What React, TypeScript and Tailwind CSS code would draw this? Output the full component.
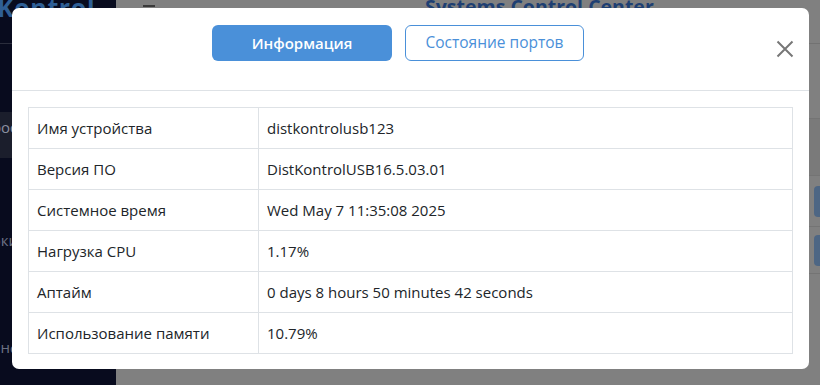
import React from "react";

const rows: [string, string][] = [
	["Имя устройства", "distkontrolusb123"],
	["Версия ПО", "DistKontrolUSB16.5.03.01"],
	["Системное время", "Wed May 7 11:35:08 2025"],
	["Нагрузка CPU", "1.17%"],
	["Аптайм", "0 days 8 hours 50 minutes 42 seconds"],
	["Использование памяти", "10.79%"],
];

// only the first ~12px of each sidebar item peeks out from under the modal
function NavItem({ text, shift, active }: { text: string; shift: string; active?: boolean }) {
	return (
		<div className={`w-[12px] overflow-hidden whitespace-nowrap text-[15px] ${active ? "text-[#8a8fa0]" : "text-[#6c7184]"}`}>
			<span className={`block ${shift}`}>{text}</span>
		</div>
	);
}

function Sidebar() {
	return (
		<aside className="w-[116px] h-full bg-[#080b1e] flex flex-col shrink-0 overflow-hidden">
			<div className="h-[44px] border-b border-[#2a2d3c] overflow-hidden">
				<p className="mt-[-11px] ml-[-3px] text-[25px] font-bold text-[#2f5f95] tracking-wide">
					Kontrol
				</p>
			</div>
			<div className="mt-[68px] h-[46px] bg-[#1b1e2c] flex items-start pt-[4px]">
				<NavItem text="Просмотр" shift="ml-[-19px]" active />
			</div>
			<div className="mt-[71px]">
				<NavItem text="Блокировки" shift="ml-[-26px]" />
			</div>
			<div className="mt-[84px]">
				<NavItem text="Информация" shift="ml-[-11px]" />
			</div>
		</aside>
	);
}

function Backdrop() {
	return (
		<main className="flex-1 h-full bg-[#808080] flex flex-col">
			<header className="h-[44px] border-b border-[#727272] flex items-start">
				<span className="ml-[27px] mt-[5px] w-[12px] h-[2px] bg-[#3a3a3a]" />
				<h1 className="ml-[270px] mt-[-8px] text-[19.5px] font-bold text-[#1e3f72]">
					Systems Control Center
				</h1>
			</header>
			<div className="mt-[74px] h-[58px] bg-[#7a7a7a] border-y border-[#747474]" />
			<div className="h-[51px] border-b border-[#747474] flex justify-end items-center">
				<span className="w-[6px] h-[31px] rounded-l bg-[#4d6684]" />
			</div>
			<div className="h-[47px] border-b border-[#747474] flex justify-end items-center">
				<span className="w-[6px] h-[31px] rounded-l bg-[#4d6684]" />
			</div>
		</main>
	);
}

function InfoModal() {
	return (
		<div className="absolute left-[12px] top-[8px] w-[797px] h-[361px] bg-white rounded-[7px] flex flex-col">
			<div className="h-[83px] border-b border-[#dee2e6] relative shrink-0">
				<div className="pl-[200px] pt-[17px] flex gap-[13px]">
					<button className="w-[180px] h-[36px] rounded-[6px] bg-[#4a90d9] text-white text-[15px] font-semibold">
						Информация
					</button>
					<button className="w-[179px] h-[36px] rounded-[6px] border border-[#4a90d9] text-[#4a90d9] text-[15.5px] bg-white">
						Состояние портов
					</button>
				</div>
				<button className="absolute left-[763px] top-[31px] w-[20px] h-[20px] text-[#777]" aria-label="close">
					<svg viewBox="0 0 20 20" className="w-[20px] h-[20px]" fill="none" stroke="currentColor" strokeWidth="2">
						<path d="M2.5 2.5 17.5 17.5M17.5 2.5 2.5 17.5" />
					</svg>
				</button>
			</div>
			<div className="px-[16px] pt-[16px]">
				<table className="w-full border-collapse text-[15px] text-[#212529]">
					<tbody>
						{rows.map(([label, value]) => (
							<tr key={label} className="h-[41px]">
								<td className="w-[230px] border border-[#dee2e6] px-[8px]">{label}</td>
								<td className="border border-[#dee2e6] px-[8px]">{value}</td>
							</tr>
						))}
					</tbody>
				</table>
			</div>
		</div>
	);
}

export default function App() {
	return (
		<div
			className="w-[820px] h-[385px] flex relative overflow-hidden"
			style={{ fontFamily: '"Open Sans", "Noto Sans", sans-serif' }}
		>
			<Sidebar />
			<Backdrop />
			<InfoModal />
		</div>
	);
}
